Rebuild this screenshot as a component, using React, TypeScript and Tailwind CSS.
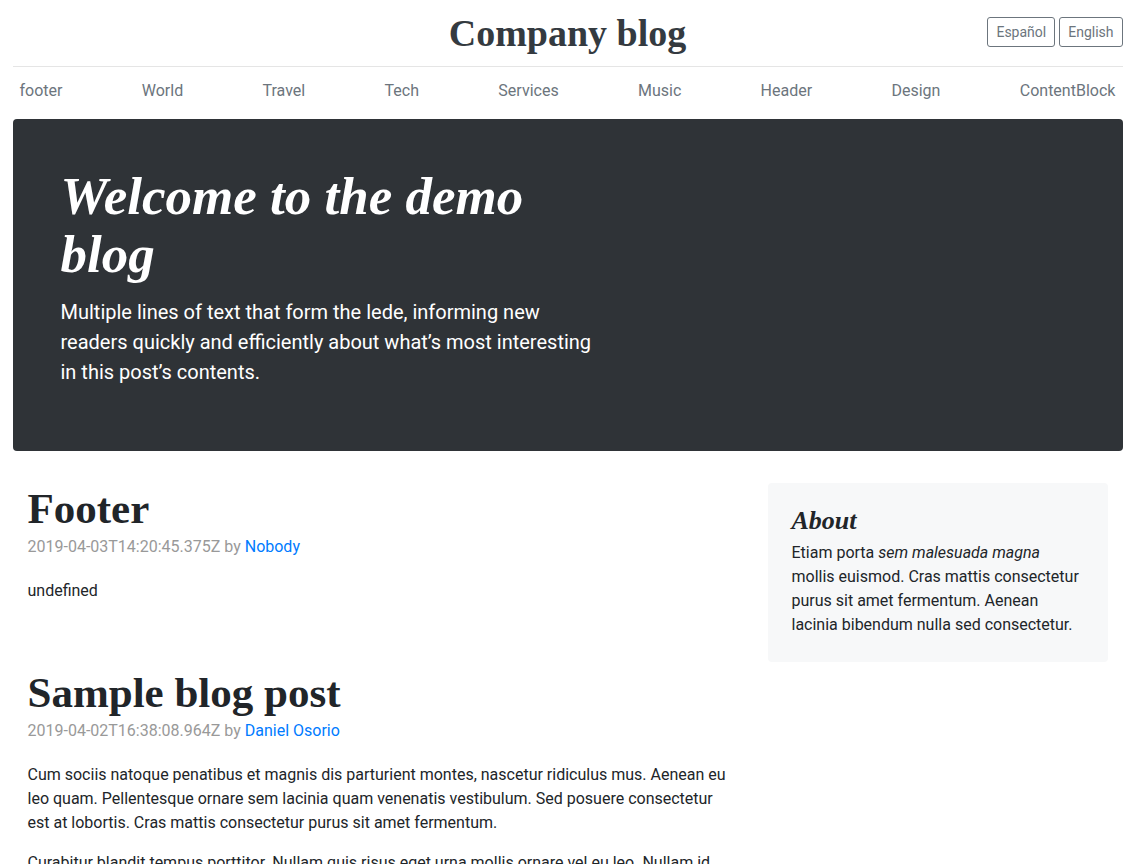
const nav = ["footer", "World", "Travel", "Tech", "Services", "Music", "Header", "Design", "ContentBlock"];

const serif = "font-['Liberation_Serif',serif]";

export default function App() {
  return (
    <div className="font-['Roboto',sans-serif] text-[#212529] text-base leading-6 bg-white min-h-screen">
      <div className="w-[1110px] mx-auto">
        <header className="relative border-b border-[#e5e5e5] py-4 flex items-center justify-center h-[67px]">
          <a className={`${serif} text-[38px] leading-none font-bold text-[#343a40]`}>Company blog</a>
          <div className="absolute right-0 top-[17px] flex gap-1">
            <button className="border border-[#6c757d] rounded-[3px] px-2 h-[30px] text-sm text-[#6c757d]">Español</button>
            <button className="border border-[#6c757d] rounded-[3px] px-2 h-[30px] text-sm text-[#6c757d]">English</button>
          </div>
        </header>

        <nav className="flex justify-between h-[46px] items-center mb-[6px] pt-[2px]">
          {nav.map((n) => (
            <a key={n} className="px-[7px] text-[#6c757d]">{n}</a>
          ))}
        </nav>

        <section className="bg-[#2f3337] rounded-[4px] text-white px-12 pt-[48px] pb-[64px] mb-8">
          <div className="w-[535px]">
            <h1 className={`${serif} italic font-bold text-[53px] leading-[58px] w-[490px]`}>Welcome to the demo blog</h1>
            <p className="text-xl leading-[30px] mt-[14px]">
              Multiple lines of text that form the lede, informing new readers quickly and efficiently about what’s most interesting in this post’s contents.
            </p>
          </div>
        </section>

        <main className="flex">
          <div className="w-[740px] px-[15px]">
            <article className="mb-16">
              <h2 className={`${serif} font-bold text-[43px] leading-[52px]`}>Footer</h2>
              <p className="text-[#999] mb-5">
                2019-04-03T14:20:45.375Z by <a className="text-[#007bff]">Nobody</a>
              </p>
              <p>undefined</p>
            </article>
            <article>
              <h2 className={`${serif} font-bold text-[43px] leading-[52px]`}>Sample blog post</h2>
              <p className="text-[#999] mb-5">
                2019-04-02T16:38:08.964Z by <a className="text-[#007bff]">Daniel Osorio</a>
              </p>
              <p className="mb-4">
                Cum sociis natoque penatibus et magnis dis parturient montes, nascetur ridiculus mus. Aenean eu leo quam. Pellentesque ornare sem lacinia quam venenatis vestibulum. Sed posuere consectetur est at lobortis. Cras mattis consectetur purus sit amet fermentum.
              </p>
              <p className="mb-4">
                Curabitur blandit tempus porttitor. Nullam quis risus eget urna mollis ornare vel eu leo. Nullam id dolor id nibh ultricies vehicula ut id elit.
              </p>
            </article>
          </div>
          <aside className="w-[370px] px-[15px]">
            <div className="bg-[#f7f8f9] rounded-[4px] p-6 h-[179px]">
              <h4 className={`${serif} italic font-bold text-[26px] leading-[28px] mb-[6px]`}>About</h4>
              <p>
                Etiam porta <em>sem malesuada magna</em> mollis euismod. Cras mattis consectetur purus sit amet fermentum. Aenean lacinia bibendum nulla sed consectetur.
              </p>
            </div>
          </aside>
        </main>
      </div>
    </div>
  );
}
